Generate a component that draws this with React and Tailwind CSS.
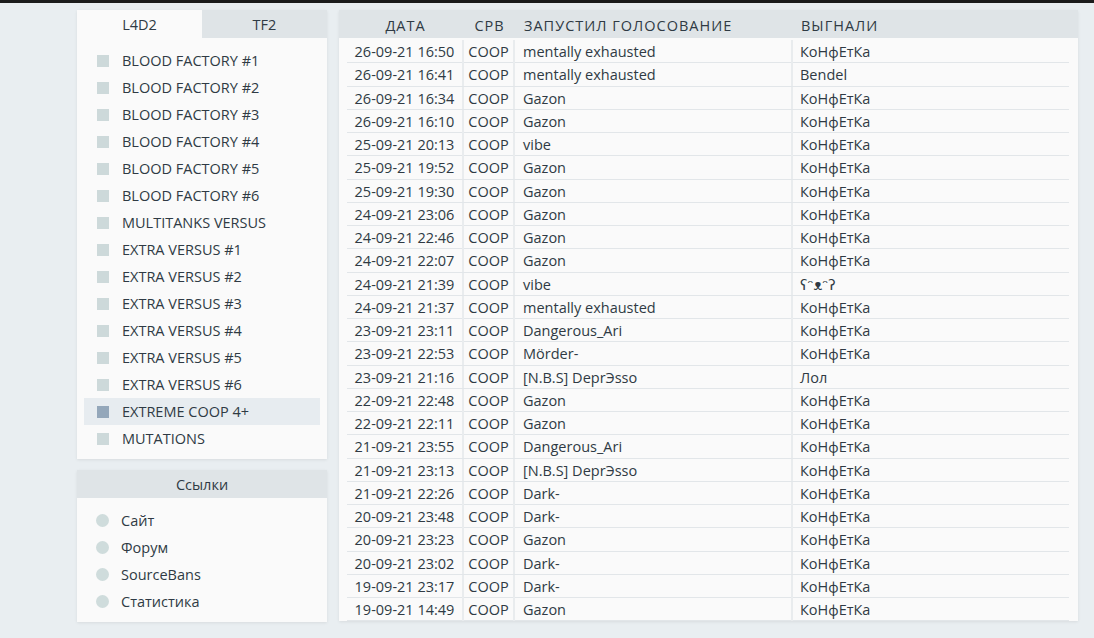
const servers = [
    "BLOOD FACTORY #1",
    "BLOOD FACTORY #2",
    "BLOOD FACTORY #3",
    "BLOOD FACTORY #4",
    "BLOOD FACTORY #5",
    "BLOOD FACTORY #6",
    "MULTITANKS VERSUS",
    "EXTRA VERSUS #1",
    "EXTRA VERSUS #2",
    "EXTRA VERSUS #3",
    "EXTRA VERSUS #4",
    "EXTRA VERSUS #5",
    "EXTRA VERSUS #6",
    "EXTREME COOP 4+",
    "MUTATIONS",
];

const links = ["Сайт", "Форум", "SourceBans", "Статистика"];

const K = "КоНфЕтКа";

const votes = [
    ["26-09-21 16:50", "mentally exhausted", K],
    ["26-09-21 16:41", "mentally exhausted", "Bendel"],
    ["26-09-21 16:34", "Gazon", K],
    ["26-09-21 16:10", "Gazon", K],
    ["25-09-21 20:13", "vibe", K],
    ["25-09-21 19:52", "Gazon", K],
    ["25-09-21 19:30", "Gazon", K],
    ["24-09-21 23:06", "Gazon", K],
    ["24-09-21 22:46", "Gazon", K],
    ["24-09-21 22:07", "Gazon", K],
    ["24-09-21 21:39", "vibe", "ʕᵔᴥᵔʔ"],
    ["24-09-21 21:37", "mentally exhausted", K],
    ["23-09-21 23:11", "Dangerous_Ari", K],
    ["23-09-21 22:53", "Mörder-", K],
    ["23-09-21 21:16", "[N.B.S] DeprЭsso", "Лол"],
    ["22-09-21 22:48", "Gazon", K],
    ["22-09-21 22:11", "Gazon", K],
    ["21-09-21 23:55", "Dangerous_Ari", K],
    ["21-09-21 23:13", "[N.B.S] DeprЭsso", K],
    ["21-09-21 22:26", "Dark-", K],
    ["20-09-21 23:48", "Dark-", K],
    ["20-09-21 23:23", "Gazon", K],
    ["20-09-21 23:02", "Dark-", K],
    ["19-09-21 23:17", "Dark-", K],
    ["19-09-21 14:49", "Gazon", K],
];

const cols = "grid grid-cols-[117px_51px_278px_276px]";

const App = () => {
    return (
        <div
            className="min-h-[638px] bg-[#e9eef1] text-[14.5px] text-[#2f3a44]"
            style={{ fontFamily: "'Open Sans', 'DejaVu Sans', sans-serif" }}
        >
            <div className="h-[3px] bg-[#1c1c1c]" />
            <div className="flex gap-[12px] pl-[77px] pt-[7px] items-start">
                {/* left column: server tabs + links */}
                <div className="w-[250px] flex flex-col gap-[11px]">
                    <div className="bg-[#fafafa] shadow-[0_1px_3px_rgba(0,0,0,0.08)]">
                        <div className="flex h-[28px] pt-[2px]">
                            <div className="flex-1 flex items-center justify-center bg-[#fafafa]">L4D2</div>
                            <div className="flex-1 flex items-center justify-center bg-[#dfe4e7] -mt-[2px] pt-[2px]">TF2</div>
                        </div>
                        <ul className="px-[7px] pt-[9px] pb-[7px]">
                            {servers.map((name) => {
                                const active = name === "EXTREME COOP 4+";
                                return (
                                    <li
                                        key={name}
                                        className={`h-[27px] flex items-center gap-[13px] pl-[13px] ${active ? "bg-[#e7ecf0]" : ""}`}
                                    >
                                        <span
                                            className={`w-[12px] h-[12px] ${active ? "bg-[#94a7ba]" : "bg-[#cdd9da]"}`}
                                        />
                                        <span className="leading-none pt-[2px]">{name}</span>
                                    </li>
                                );
                            })}
                        </ul>
                    </div>
                    <div className="bg-[#fafafa] shadow-[0_1px_3px_rgba(0,0,0,0.08)]">
                        <div className="h-[28px] flex items-center justify-center bg-[#dfe4e7] pt-[2px]">Ссылки</div>
                        <ul className="px-[7px] pt-[9px] pb-[7px]">
                            {links.map((l) => (
                                <li key={l} className="h-[27px] flex items-center gap-[12px] pl-[12px]">
                                    <span className="w-[13px] h-[13px] rounded-full bg-[#cfdcdc]" />
                                    <span className="leading-none pt-[2px]">{l}</span>
                                </li>
                            ))}
                        </ul>
                    </div>
                </div>

                {/* right column: vote log */}
                <div className="w-[739px] bg-[#fafafa] shadow-[0_1px_3px_rgba(0,0,0,0.08)]">
                    <div className="bg-[#dfe4e7] h-[28px] px-[8px] pt-[3px]">
                        <div className={`${cols} h-full items-center tracking-[1px] text-[14.5px]`}>
                            <div className="text-center">ДАТА</div>
                            <div className="text-center">СРВ</div>
                            <div className="pl-[9px]">ЗАПУСТИЛ ГОЛОСОВАНИЕ</div>
                            <div className="pl-[8px]">ВЫГНАЛИ</div>
                        </div>
                    </div>
                    <div className="pl-[8px] pr-[9px] pt-[2px]">
                        {votes.map(([date, who, kicked], i) => (
                            <div
                                key={i}
                                className={`${cols} h-[23.25px] border-b border-[#e2e6e9] items-stretch`}
                            >
                                <div className="flex items-center justify-center pt-[1px] border-r-2 border-[#e9ecee]">{date}</div>
                                <div className="flex items-center justify-center pt-[1px] border-r-2 border-[#e9ecee]">COOP</div>
                                <div className="flex items-center pl-[8px] pt-[1px] border-r-2 border-[#e9ecee]">{who}</div>
                                <div className="flex items-center pl-[7px] pt-[1px]">{kicked}</div>
                            </div>
                        ))}
                    </div>
                </div>
            </div>
        </div>
    );
};

export default App;
